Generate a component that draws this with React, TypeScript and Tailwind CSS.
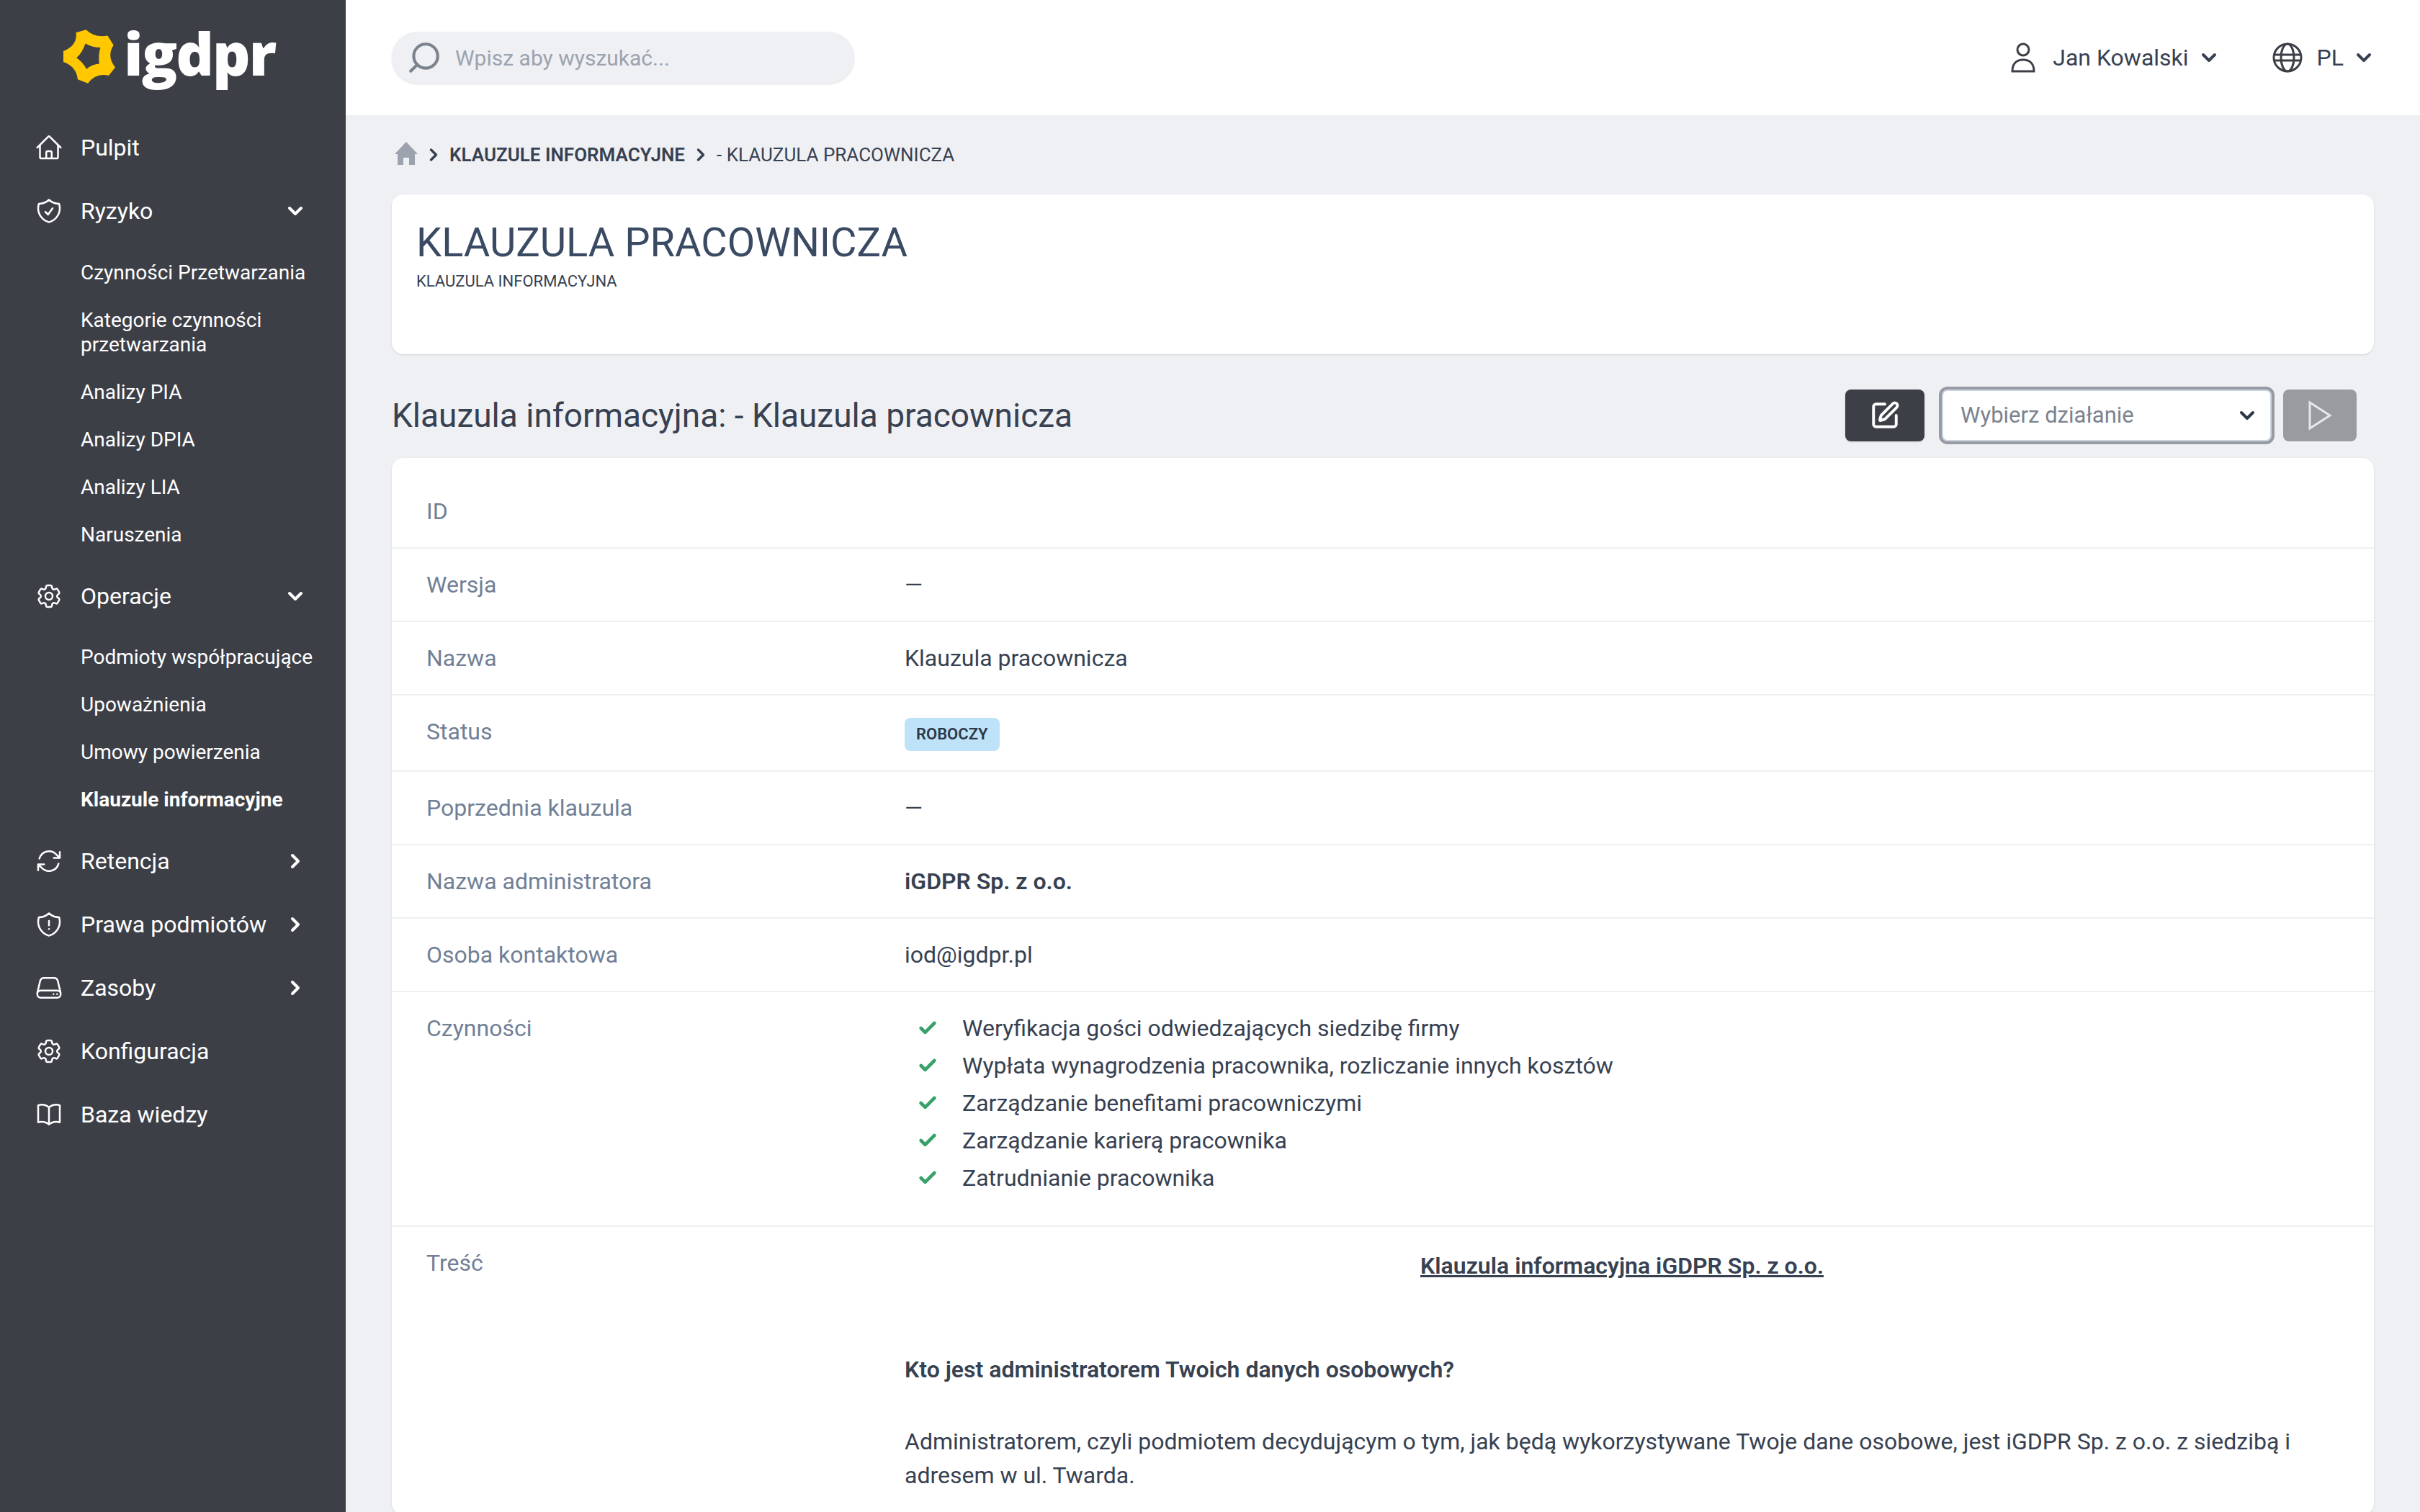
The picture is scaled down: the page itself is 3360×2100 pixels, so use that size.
import React from 'react';
import { ChevronDown, ChevronRight, Check, Search, SquarePen } from 'lucide-react';
import {
  HiOutlineHome,
  HiOutlineShieldCheck,
  HiOutlineCog6Tooth,
  HiOutlineArrowPath,
  HiOutlineShieldExclamation,
  HiOutlineServer,
  HiOutlineBookOpen,
} from 'react-icons/hi2';

const Logo = () => (
  <div className="flex items-center h-[80px] pl-[88px] mt-[38px]">
    <svg width="72" height="75" viewBox="55 60 217 225" className="shrink-0">
      <path
        fillRule="evenodd"
        fill="#ffc800"
        d="M108 72 L150 60 Q185 95 240 85 L265 125 Q235 170 272 218 L245 252 Q190 240 158 285 L115 268 Q110 215 55 195 L55 150 Q115 125 108 72 Z M110 178 Q135 155 147 118 Q178 135 210 135 Q200 170 205 203 Q175 205 152 225 Q135 195 110 178 Z"
      />
    </svg>
    <span className="ml-[12px] text-[82px] leading-none font-extrabold text-white font-['Open_Sans',sans-serif] tracking-[-2px] -mt-[10px]">
      igdpr
    </span>
  </div>
);

type NavProps = {
  icon: React.ReactNode;
  label: string;
  open?: boolean;
  closed?: boolean;
};

const NavItem = ({ icon, label, open, closed }: NavProps) => (
  <div className="flex items-center h-[88px] pl-12 pr-[54px] text-[32px] text-white">
    <span className="w-10 h-10 shrink-0 flex items-center justify-center">{icon}</span>
    <span className="ml-6 flex-1 whitespace-nowrap">{label}</span>
    {open && <ChevronDown size={32} strokeWidth={3} />}
    {closed && <ChevronRight size={32} strokeWidth={3} />}
  </div>
);

const SubItem = ({ label, active }: { label: string; active?: boolean }) => (
  <div className={`pl-[112px] pr-6 py-4 text-[28px] leading-[34px] text-white ${active ? 'font-bold' : ''}`}>{label}</div>
);

const Sidebar = () => (
  <aside className="w-[480px] shrink-0 bg-[#3d3f47] h-[2100px]">
    <Logo />
    <nav className="mt-[43px]">
      <NavItem icon={<HiOutlineHome size={40} />} label="Pulpit" />
      <NavItem icon={<HiOutlineShieldCheck size={40} />} label="Ryzyko" open />
      <div className="pt-[9px] pb-2">
        <SubItem label="Czynności Przetwarzania" />
        <SubItem label="Kategorie czynności przetwarzania" />
        <SubItem label="Analizy PIA" />
        <SubItem label="Analizy DPIA" />
        <SubItem label="Analizy LIA" />
        <SubItem label="Naruszenia" />
      </div>
      <NavItem icon={<HiOutlineCog6Tooth size={40} />} label="Operacje" open />
      <div className="pt-2 pb-2">
        <SubItem label="Podmioty współpracujące" />
        <SubItem label="Upoważnienia" />
        <SubItem label="Umowy powierzenia" />
        <SubItem label="Klauzule informacyjne" active />
      </div>
      <NavItem icon={<HiOutlineArrowPath size={40} />} label="Retencja" closed />
      <NavItem icon={<HiOutlineShieldExclamation size={40} />} label="Prawa podmiotów" closed />
      <NavItem icon={<HiOutlineServer size={40} />} label="Zasoby" closed />
      <NavItem icon={<HiOutlineCog6Tooth size={40} />} label="Konfiguracja" />
      <NavItem icon={<HiOutlineBookOpen size={40} />} label="Baza wiedzy" />
    </nav>
  </aside>
);

const Header = () => (
  <header className="h-[160px] bg-white flex items-center pl-[64px] pr-[62px]">
    <div className="w-[642px] h-[72px] rounded-full bg-[#eff0f4] shadow-sm flex items-center pl-5">
      <Search size={50} strokeWidth={2} className="text-[#7b838e] -scale-x-100" />
      <span className="ml-[18px] text-[30px] text-[#9ca3af]">Wpisz aby wyszukać...</span>
    </div>
    <div className="ml-auto flex items-center text-[32px] text-[#374151]">
      <svg width="34" height="42" viewBox="0 0 34 42" fill="none" stroke="#3d3f47" strokeWidth="3">
        <circle cx="17" cy="10" r="8" />
        <path d="M2 40 C2 28 9 24 17 24 C25 24 32 28 32 40 Z" />
      </svg>
      <span className="ml-6">Jan Kowalski</span>
      <ChevronDown size={32} strokeWidth={3} className="ml-3" />
      <svg width="42" height="42" viewBox="0 0 42 42" fill="none" stroke="#3d3f47" strokeWidth="3" className="ml-[72px]">
        <circle cx="21" cy="21" r="19" />
        <ellipse cx="21" cy="21" rx="9" ry="19" />
        <path d="M3 17 H39 M3 25 H39" />
      </svg>
      <span className="ml-5">PL</span>
      <ChevronDown size={32} strokeWidth={3} className="ml-3" />
    </div>
  </header>
);

const Row = ({ label, children, last }: { label: string; children: React.ReactNode; last?: boolean }) => (
  <div className={`flex ${last ? '' : 'border-b-2 border-[#eff0f4]'} pl-12 pr-12 py-[31px]`}>
    <div className="w-[664px] shrink-0 text-[32px] leading-[38px] text-[#718096]">{label}</div>
    <div className="flex-1 min-w-0 text-[32px] leading-[38px] text-[#374151]">{children}</div>
  </div>
);

const activities = [
  'Weryfikacja gości odwiedzających siedzibę firmy',
  'Wypłata wynagrodzenia pracownika, rozliczanie innych kosztów',
  'Zarządzanie benefitami pracowniczymi',
  'Zarządzanie karierą pracownika',
  'Zatrudnianie pracownika',
];

export default function App() {
  return (
    <div className="flex w-[3360px] h-[2100px] overflow-hidden bg-[#eff0f4] font-['Roboto',sans-serif]">
      <Sidebar />
      <div className="flex-1 min-w-0">
        <Header />
        <div className="pl-[64px] pr-[64px]">
          <div className="flex items-center h-[110px] text-[26px] text-[#374151]">
            <svg width="32" height="32" viewBox="0 0 32 32" fill="#9ca3af" className="ml-1 -mt-1">
              <path d="M16 0 L32 17 H28 V32 H20 V22 H12 V32 H4 V17 H0 Z" />
            </svg>
            <ChevronRight size={28} strokeWidth={3} className="ml-2" />
            <span className="ml-2 font-semibold">KLAUZULE INFORMACYJNE</span>
            <ChevronRight size={28} strokeWidth={3} className="ml-2" />
            <span className="ml-2">- KLAUZULA PRACOWNICZA</span>
          </div>
          <div className="h-[222px] bg-white rounded-2xl shadow-sm pl-[34px] pt-[35px]">
            <h1 className="text-[56px] leading-[64px] text-[#3a4a63]">KLAUZULA PRACOWNICZA</h1>
            <p className="text-[22px] leading-[28px] mt-2 text-[#374151]">KLAUZULA INFORMACYJNA</p>
          </div>
          <div className="flex items-center h-[144px] pt-[26px]">
            <h2 className="text-[46px] text-[#374151]">Klauzula informacyjna: - Klauzula pracownicza</h2>
            <button className="ml-auto w-[110px] h-[72px] rounded-lg bg-[#3d3f47] shadow-sm flex items-center justify-center text-white">
              <SquarePen size={42} strokeWidth={2.25} />
            </button>
            <div className="ml-[24px] w-[458px] h-[72px] rounded-lg bg-white border-2 border-[#cbd5e0] ring-4 ring-[#979aa3] flex items-center pl-6 pr-4 text-[31px] text-[#7b838e]">
              <span className="flex-1">Wybierz działanie</span>
              <ChevronDown size={32} strokeWidth={3} className="text-[#2d3748]" />
            </div>
            <button className="ml-[16px] mr-6 w-[102px] h-[72px] rounded-lg bg-[#9a9b9f] flex items-center justify-center">
              <svg width="34" height="42" viewBox="0 0 34 42" fill="none" stroke="#e5e7eb" strokeWidth="3">
                <path d="M3 3 V39 L31 21 Z" />
              </svg>
            </button>
          </div>
          <div className="bg-white rounded-2xl shadow-sm pt-6">
            <Row label="ID">
              <span />
            </Row>
            <Row label="Wersja">—</Row>
            <Row label="Nazwa">Klauzula pracownicza</Row>
            <Row label="Status">
              <span className="inline-flex items-center h-[46px] -my-1 px-4 rounded-lg bg-[#bee3f8] text-[22px] font-semibold text-[#2d3748]">ROBOCZY</span>
            </Row>
            <Row label="Poprzednia klauzula">—</Row>
            <Row label="Nazwa administratora">
              <span className="font-semibold">iGDPR Sp. z o.o.</span>
            </Row>
            <Row label="Osoba kontaktowa">iod@igdpr.pl</Row>
            <Row label="Czynności">
              <ul className="flex flex-col gap-[14px] pb-4">
                {activities.map((a) => (
                  <li key={a} className="flex items-center">
                    <Check size={28} strokeWidth={4} className="ml-[18px] text-[#38a169]" />
                    <span className="ml-[34px]">{a}</span>
                  </li>
                ))}
              </ul>
            </Row>
            <Row label="Treść" last>
              <p className="text-center font-semibold underline mt-1">Klauzula informacyjna iGDPR Sp. z o.o.</p>
              <p className="font-semibold mt-[106px]">Kto jest administratorem Twoich danych osobowych?</p>
              <p className="mt-[58px] leading-[47px]">
                Administratorem, czyli podmiotem decydującym o tym, jak będą wykorzystywane Twoje dane osobowe, jest iGDPR Sp. z o.o. z siedzibą i adresem w ul. Twarda.
              </p>
            </Row>
          </div>
        </div>
      </div>
    </div>
  );
}
